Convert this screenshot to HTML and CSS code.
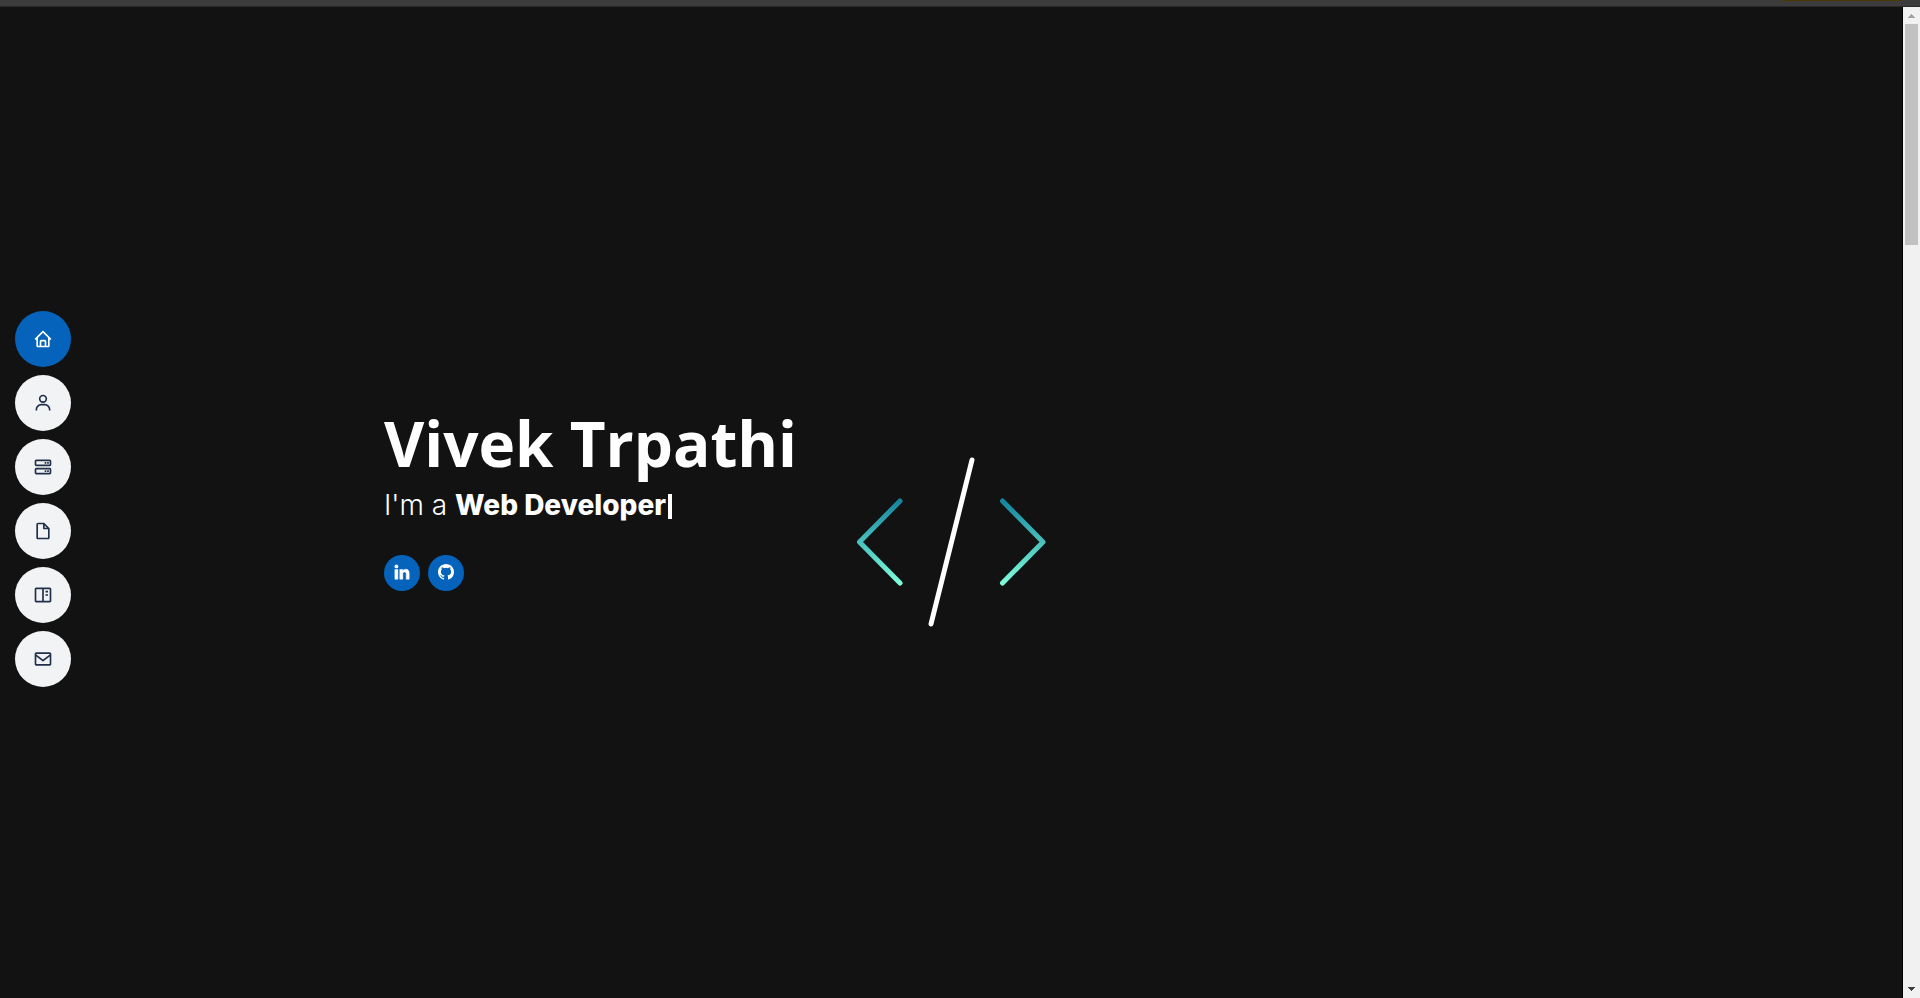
FILE: index.html
```
<!DOCTYPE html>
<html lang="en">
<head>
<meta charset="utf-8">
<title>Vivek Trpathi</title>
<link rel="stylesheet" href="styles.css">
</head>
<body>
<div class="topbar"><span class="topbar-accent"></span></div>
<div class="viewport">
  <div class="page">
    <nav class="side-nav" aria-label="Main">
      <a class="nav-link active" href="#hero" aria-label="Home"><svg class="icon" viewBox="0 0 24 24"><path d="M3 13h1v7c0 1.103.897 2 2 2h12c1.103 0 2-.897 2-2v-7h1a1 1 0 0 0 .707-1.707l-9-9a.999.999 0 0 0-1.414 0l-9 9A1 1 0 0 0 3 13zm7 7v-5h4v5h-4zm2-15.586 6 6V15l.001 5H16v-5c0-1.103-.897-2-2-2h-4c-1.103 0-2 .897-2 2v5H6v-9.586l6-6z"/></svg></a>
      <a class="nav-link" href="#about" aria-label="About"><svg class="icon" viewBox="0 0 24 24"><path d="M12 2a5 5 0 1 0 5 5 5 5 0 0 0-5-5zm0 8a3 3 0 1 1 3-3 3 3 0 0 1-3 3zm9 11v-1a7 7 0 0 0-7-7h-4a7 7 0 0 0-7 7v1h2v-1a5 5 0 0 1 5-5h4a5 5 0 0 1 5 5v1z"/></svg></a>
      <a class="nav-link" href="#services" aria-label="Services"><svg class="icon" viewBox="0 0 24 24"><path d="M20 3H4a2 2 0 0 0-2 2v4a2 2 0 0 0 2 2h16a2 2 0 0 0 2-2V5a2 2 0 0 0-2-2zM4 9V5h16v4zm16 4H4a2 2 0 0 0-2 2v4a2 2 0 0 0 2 2h16a2 2 0 0 0 2-2v-4a2 2 0 0 0-2-2zM4 19v-4h16v4z"/><path d="M17 6h2v2h-2zm-3 0h2v2h-2zm3 10h2v2h-2zm-3 0h2v2h-2z"/></svg></a>
      <a class="nav-link" href="#resume" aria-label="Resume"><svg class="icon" viewBox="0 0 24 24"><path d="M19.937 8.68c-.011-.032-.02-.063-.033-.094a.997.997 0 0 0-.196-.293l-6-6a.997.997 0 0 0-.293-.196c-.03-.014-.062-.022-.094-.033a.991.991 0 0 0-.259-.051C13.04 2.011 13.021 2 13 2H6c-1.103 0-2 .897-2 2v16c0 1.103.897 2 2 2h12c1.103 0 2-.897 2-2V9c0-.021-.011-.04-.013-.062a.99.99 0 0 0-.05-.258zM16.586 8H14V5.414L16.586 8zM6 20V4h6v5a1 1 0 0 0 1 1h5l.002 10H6z"/></svg></a>
      <a class="nav-link" href="#portfolio" aria-label="Portfolio"><svg class="icon" viewBox="0 0 24 24"><path d="M20 3H4c-1.103 0-2 .897-2 2v14c0 1.103.897 2 2 2h16c1.103 0 2-.897 2-2V5c0-1.103-.897-2-2-2zM4 19V5h7v14H4zm9 0V5h7l.001 14H13z"/><path d="M15 7h3v2h-3zm0 4h3v2h-3z"/></svg></a>
      <a class="nav-link" href="#contact" aria-label="Contact"><svg class="icon" viewBox="0 0 24 24"><path d="M20 4H4c-1.103 0-2 .897-2 2v12c0 1.103.897 2 2 2h16c1.103 0 2-.897 2-2V6c0-1.103-.897-2-2-2zm0 2v.511l-8 6.223-8-6.222V6h16zM4 18V9.044l7.386 5.745a.994.994 0 0 0 1.228 0L20 9.044 20.002 18H4z"/></svg></a>
    </nav>
    <main class="hero" id="hero">
      <div class="intro">
        <h1 class="name">Vivek Trpathi</h1>
        <p class="role">I'm a <strong>Web Developer</strong><span class="cursor"></span></p>
        <div class="social">
          <a class="social-link" href="#linkedin" aria-label="LinkedIn"><svg class="icon linkedin" viewBox="2 2 20 20"><circle cx="4.983" cy="5.009" r="2.400"/><path stroke="currentColor" stroke-width=".6" d="M9.237 8.855v12.139h3.769v-6.003c0-1.584.298-3.118 2.262-3.118 1.937 0 1.961 1.811 1.961 3.218v5.904H21v-6.657c0-3.270-.704-5.783-4.526-5.783-1.835 0-3.065 1.007-3.568 1.960h-.051v-1.660H9.237zm-6.142 0H6.870v12.139H3.095z"/></svg></a>
          <a class="social-link" href="#github" aria-label="GitHub"><svg class="icon github" viewBox="2 2 20 20"><path d="M12.026 2c-5.509 0-9.974 4.465-9.974 9.974 0 4.406 2.857 8.145 6.821 9.465.499.09.679-.217.679-.481 0-.237-.008-.865-.011-1.696-2.775.602-3.361-1.338-3.361-1.338-.452-1.152-1.107-1.459-1.107-1.459-.905-.619.069-.605.069-.605 1.002.07 1.527 1.028 1.527 1.028.89 1.524 2.336 1.084 2.902.829.091-.645.351-1.085.635-1.334-2.214-.251-4.542-1.107-4.542-4.93 0-1.087.389-1.979 1.024-2.675-.101-.253-.446-1.268.099-2.64 0 0 .837-.269 2.742 1.021a9.582 9.582 0 0 1 4.992 0c1.906-1.291 2.742-1.021 2.742-1.021.545 1.372.203 2.387.099 2.64.64.696 1.024 1.587 1.024 2.675 0 3.833-2.33 4.675-4.552 4.922.355.308.675.916.675 1.846 0 1.334-.012 2.41-.012 2.737 0 .267.178.577.687.479C19.146 20.115 22 16.379 22 11.974 22 6.465 17.535 2 12.026 2z"/></svg></a>
        </div>
      </div>
      <svg class="code-mark" viewBox="0 0 190 170" role="img" aria-label="Code">
        <defs><linearGradient id="teal" gradientUnits="userSpaceOnUse" x1="0" y1="42" x2="0" y2="128"><stop offset="0" stop-color="#13829f"/><stop offset="1" stop-color="#80ffdb"/></linearGradient></defs>
        <path d="M43 44 2.500 85 43 126M145.500 44 186 85 145.500 126" stroke="url(#teal)"/>
        <path d="M115 3 74 167" stroke="#fff"/>
      </svg>
    </main>
  </div>
  <div class="scrollbar" aria-hidden="true">
    <svg class="arrow up" viewBox="0 0 7 4"><path d="M0 4V3H1V2H2V1H3V0H4V1H5V2H6V3H7V4Z"/></svg>
    <div class="thumb"></div>
    <svg class="arrow down" viewBox="0 0 7 4"><path d="M0 0V1H1V2H2V3H3V4H4V3H5V2H6V1H7V0Z"/></svg>
  </div>
</div>
</body>
</html>
```
FILE: styles.css
```
* { box-sizing: border-box; }
body {
  margin: 0;
  min-height: 100vh;
  display: flex;
  flex-direction: column;
  background: #121212;
  color: #fff;
  font-family: "Open Sans", sans-serif;
}
.topbar {
  height: 7px;
  padding: 0 18px;
  background: #3c3c3c;
  display: flex;
  justify-content: flex-end;
  border-bottom: 1px solid #292929;
}
.topbar-accent {
  width: 120px;
  height: 1px;
  background: #4a3900;
  border-radius: 0 0 4px 4px;
}
.viewport { flex: 1; display: flex; }
.page { flex: 1; display: flex; position: relative; border-right: 1px solid #000; }
.side-nav {
  position: absolute;
  left: 15px;
  top: 0;
  bottom: 0;
  padding-bottom: 8px;
  display: flex;
  flex-direction: column;
  justify-content: center;
  gap: 8px;
}
.nav-link {
  width: 56px;
  height: 56px;
  border-radius: 50%;
  background: #f2f3f5;
  color: #20304a;
  display: flex;
  align-items: center;
  justify-content: center;
}
.nav-link.active { background: #0563bb; color: #fff; }
.icon { width: 20px; height: 20px; fill: currentColor; }
.hero {
  width: 100%;
  max-width: 1134px;
  margin: 0 auto;
  display: grid;
  grid-template-columns: 5fr 7fr;
  align-content: center;
  align-items: center;
}
.intro { padding-bottom: 8px; }
.name {
  margin: 0;
  font-weight: 700;
  font-size: 62px;
  line-height: 72px;
  white-space: nowrap;
}
.role {
  margin: 8px 0 32px;
  font-family: Inter, sans-serif;
  font-size: 28px;
  font-weight: 300;
  line-height: 36px;
}
.role strong { font-weight: 800; }
.cursor {
  display: inline-block;
  width: 4px;
  height: 25px;
  margin-left: 2px;
  background: #fff;
  vertical-align: middle;
}
.social { display: flex; gap: 8px; }
.social-link {
  width: 36px;
  height: 36px;
  padding-bottom: 2px;
  border-radius: 50%;
  background: #0563bb;
  color: #fff;
  display: flex;
  align-items: center;
  justify-content: center;
}
.social-link .icon { width: 16px; height: 16px; }
.code-mark {
  width: 190px;
  height: 170px;
  margin-top: 78px;
  fill: none;
  stroke-width: 5;
  stroke-linecap: round;
  stroke-linejoin: round;
}
.scrollbar {
  width: 17px;
  background: #f1f1f1;
  padding: 7px 2px 7px;
  display: flex;
  flex-direction: column;
  align-items: center;
}
.arrow { width: 7px; height: 4px; }
.arrow.up { fill: #a3a3a3; }
.arrow.down { fill: #404040; margin-top: auto; }
.thumb { width: 13px; height: 221px; margin-top: 6px; background: #c1c1c1; }
```
